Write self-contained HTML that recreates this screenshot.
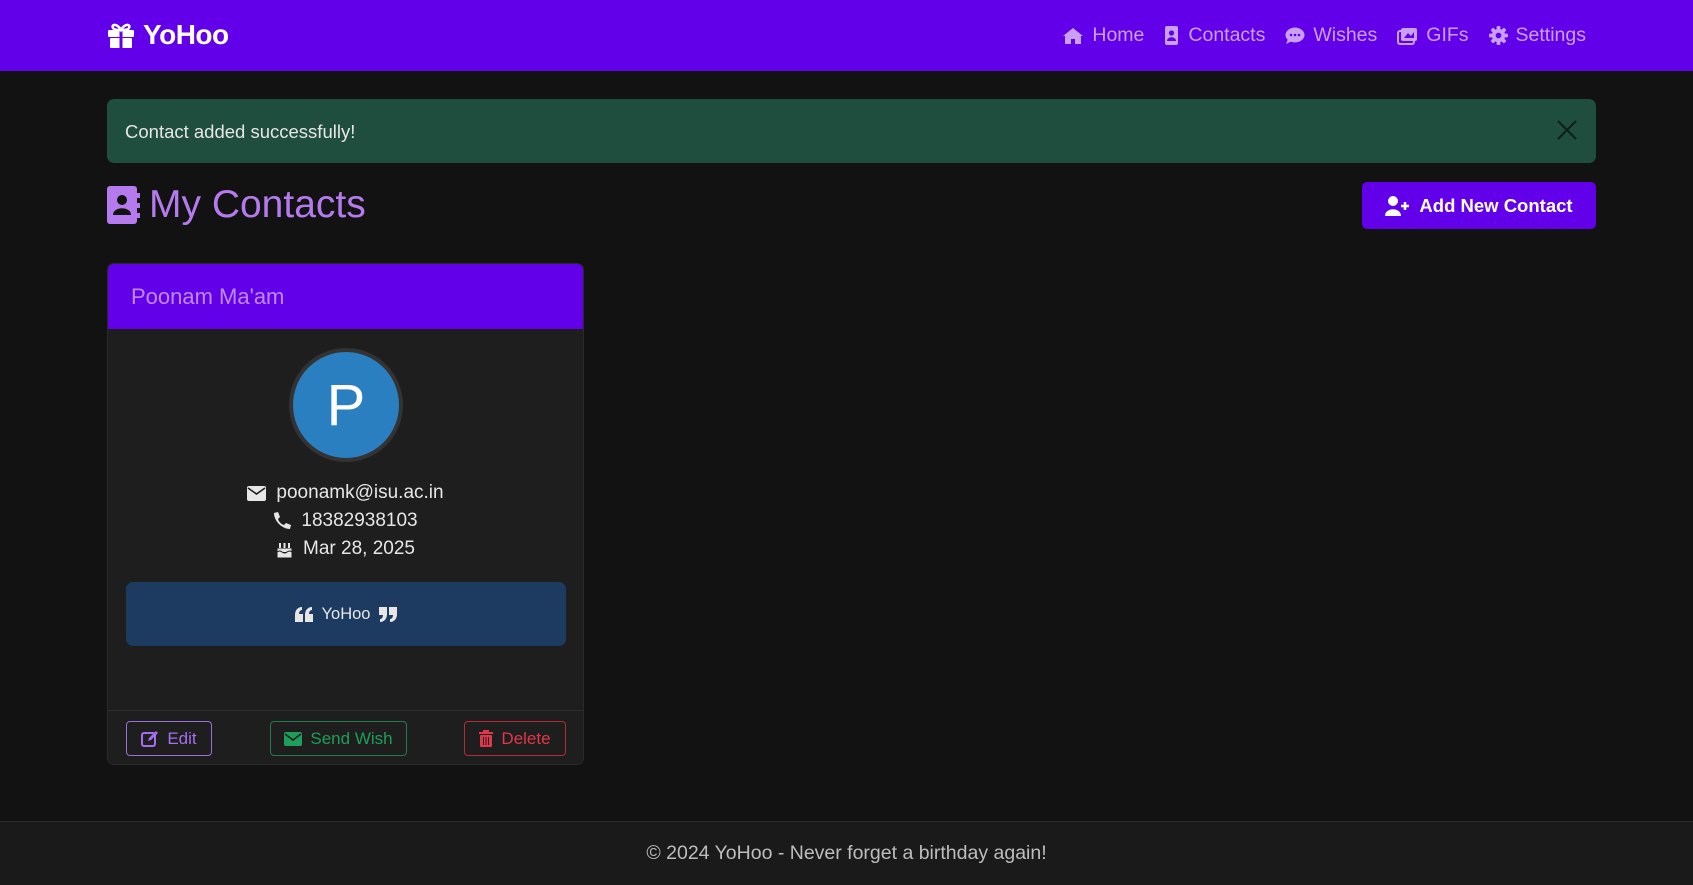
<!DOCTYPE html>
<html><head><meta charset="utf-8"><style>
*{box-sizing:border-box;margin:0;padding:0}
body{width:1693px;height:885px;background:#121212;font-family:"Liberation Sans",sans-serif;color:#e6e6e6;position:relative;overflow:hidden}
.nav{position:absolute;left:0;top:0;width:1693px;height:71px;background:#6200ea}
.brand{position:absolute;left:107px;top:19px;color:#fff;font-weight:bold;font-size:28px;display:flex;align-items:center;gap:8px;letter-spacing:-0.5px}
.links{position:absolute;right:107px;top:24px;display:flex;gap:20px;font-size:19.5px;color:#c9a0f5}
.links span{display:flex;align-items:center;gap:8px}
.alert{position:absolute;left:107px;top:99px;width:1489px;height:64px;background:#1f4d3e;border-radius:7px;font-size:18.5px;color:#e6e6e6;padding:22px 0 0 18px}
.x{position:absolute;right:18px;top:20px}
.title{position:absolute;left:107px;top:183px;display:flex;align-items:center;gap:9px;font-size:39px;color:#b57bee}
.add{position:absolute;left:1362px;top:182px;width:234px;height:47px;background:#6200ea;border-radius:5px;color:#fff;font-weight:bold;font-size:18.5px;display:flex;align-items:center;justify-content:center;gap:9px}
.card{position:absolute;left:107px;top:263px;width:477px;height:502px;background:#1e1e1e;border:1px solid #2a2a2a;border-radius:7px;overflow:hidden}
.ch{height:65px;background:#6200ea;color:#c08af5;font-size:22px;padding:20px 0 0 23px}
.av{position:absolute;left:181px;top:84px;width:114px;height:114px;border-radius:50%;background:#2a7fc0;border:4px solid #333;color:#fff;font-size:58px;display:flex;align-items:center;justify-content:center}
.info{position:absolute;left:0;width:100%;text-align:center;font-size:19px;color:#e6e6e6;display:flex;justify-content:center;align-items:center;gap:10px}
.q{position:absolute;left:18px;top:318px;width:440px;height:64px;background:#1d3a61;border-radius:7px;display:flex;align-items:center;justify-content:center;gap:9px;font-size:16.5px;color:#e6e6e6}
.cf{position:absolute;left:0;top:446px;width:100%;height:56px;border-top:1px solid #2c2c2c;background:#1e1e1e}
.b{position:absolute;top:10px;height:35px;border:1px solid;border-radius:4px;font-size:17px;display:flex;align-items:center;justify-content:center;gap:8px}
.foot{position:absolute;left:0;top:821px;width:1693px;height:64px;background:#1a1a1a;border-top:1px solid #2c2c2c;text-align:center;font-size:19.5px;color:#bdbdbd;padding-top:20px}
</style></head><body>
<div class="nav">
 <div class="brand"><svg width="28" height="26" viewBox="0 0 28 26"><rect x="1" y="8" width="26" height="7" rx="1" fill="#fff"/><rect x="3" y="16" width="22" height="10" rx="1" fill="#fff"/><rect x="12.5" y="8" width="3" height="18" fill="#6200ea"/><path d="M14 8 C10 1 4 2 6 6 C7 8 11 8 14 8 C17 8 21 8 22 6 C24 2 18 1 14 8Z" fill="none" stroke="#fff" stroke-width="2.5"/></svg>YoHoo</div>
 <div class="links">
  <span><svg width="22" height="18" viewBox="0 0 22 18"><path d="M11 1 L1 9 L3 9 L3 17 L9 17 L9 12 L13 12 L13 17 L19 17 L19 9 L21 9Z" fill="#c9a0f5"/></svg>Home</span>
  <span><svg width="16" height="19" viewBox="0 0 16 19"><rect x="1" y="0" width="13" height="19" rx="2" fill="#c9a0f5"/><circle cx="7.5" cy="7" r="2.6" fill="#6200ea"/><path d="M3 15 C3 10 12 10 12 15Z" fill="#6200ea"/></svg>Contacts</span>
  <span><svg width="20" height="18" viewBox="0 0 20 18"><ellipse cx="10" cy="8" rx="9.5" ry="7.5" fill="#c9a0f5"/><path d="M3 12 L1 17 L7 14Z" fill="#c9a0f5"/><circle cx="6" cy="8" r="1.3" fill="#6200ea"/><circle cx="10" cy="8" r="1.3" fill="#6200ea"/><circle cx="14" cy="8" r="1.3" fill="#6200ea"/></svg>Wishes</span>
  <span><svg width="21" height="18" viewBox="0 0 21 18"><rect x="4" y="1" width="16" height="13" rx="2" fill="#c9a0f5"/><rect x="1" y="4" width="16" height="13" rx="2" fill="none" stroke="#c9a0f5" stroke-width="2"/><path d="M7 11 L11 6 L14 9 L17 5 L17 11Z" fill="#6200ea"/></svg>GIFs</span>
  <span><svg width="19" height="19" viewBox="0 0 20 20"><g fill="#c9a0f5"><circle cx="10" cy="10" r="7"/><rect x="8" y="0" width="4" height="20" rx="1"/><rect x="0" y="8" width="20" height="4" rx="1"/><rect x="8" y="0" width="4" height="20" rx="1" transform="rotate(45 10 10)"/><rect x="8" y="0" width="4" height="20" rx="1" transform="rotate(-45 10 10)"/></g><circle cx="10" cy="10" r="3" fill="#6200ea"/></svg>Settings</span>
 </div>
</div>
<div class="alert">Contact added successfully!<svg class="x" width="22" height="22" viewBox="0 0 22 22"><path d="M2 2 L20 20 M20 2 L2 20" stroke="#0b1f18" stroke-width="2"/></svg></div>
<div class="title"><svg width="33" height="38" viewBox="0 0 33 38"><rect x="0" y="0" width="30" height="38" rx="3" fill="#b57bee"/><rect x="29" y="7" width="4" height="5" fill="#b57bee"/><rect x="29" y="17" width="4" height="5" fill="#b57bee"/><rect x="29" y="27" width="4" height="5" fill="#b57bee"/><circle cx="15" cy="14" r="5" fill="#121212"/><path d="M6 29 C6 20 24 20 24 29Z" fill="#121212"/></svg>My Contacts</div>
<div class="add"><svg width="25" height="20" viewBox="0 0 25 20"><circle cx="8" cy="5" r="5" fill="#fff"/><path d="M0 20 C0 11 16 11 16 20Z" fill="#fff"/><path d="M20 6 V14 M16 10 H24" stroke="#fff" stroke-width="2.5"/></svg>Add New Contact</div>
<div class="card">
 <div class="ch">Poonam Ma'am</div>
 <div class="av">P</div>
 <div class="info" style="top:218px"><svg width="19" height="15" viewBox="0 0 19 15"><rect x="0" y="0" width="19" height="15" rx="2" fill="#e6e6e6"/><path d="M1 2 L9.5 8 L18 2" stroke="#1e1e1e" stroke-width="1.6" fill="none"/></svg>poonamk@isu.ac.in</div>
 <div class="info" style="top:246px"><svg width="18" height="18" viewBox="0 0 18 18"><path d="M17 1 L13 0 L11 5 L13 7 C12 10 10 12 7 13 L5 11 L0 13 L1 17 C9 17 17 9 17 1Z" fill="#e6e6e6" transform="translate(18 0) scale(-1 1)"/></svg>18382938103</div>
 <div class="info" style="top:274px"><svg width="17" height="18" viewBox="0 0 17 18"><path d="M1 18 V8 H16 V18Z M1 12 Q4 10 6 12 Q9 14 11 12 Q14 10 16 12" fill="#e6e6e6" stroke="#1e1e1e" stroke-width="1"/><rect x="3" y="3" width="2" height="5" fill="#e6e6e6"/><rect x="7.5" y="3" width="2" height="5" fill="#e6e6e6"/><rect x="12" y="3" width="2" height="5" fill="#e6e6e6"/></svg>Mar 28, 2025</div>
 <div class="q"><svg width="18" height="15" viewBox="0 0 18 15"><path d="M0 15 V8 C0 3 3 0 7 0 V3 C5 3 4 5 4 7 H8 V15Z M10 15 V8 C10 3 13 0 17 0 V3 C15 3 14 5 14 7 H18 V15Z" fill="#e6e6e6"/></svg>YoHoo<svg width="18" height="15" viewBox="0 0 18 15"><path d="M0 15 V8 C0 3 3 0 7 0 V3 C5 3 4 5 4 7 H8 V15Z M10 15 V8 C10 3 13 0 17 0 V3 C15 3 14 5 14 7 H18 V15Z" fill="#e6e6e6" transform="rotate(180 9 7.5)"/></svg></div>
 <div class="cf">
  <div class="b" style="left:18px;width:86px;border-color:#9b6fd8;color:#a56ef0"><svg width="18" height="17" viewBox="0 0 18 17"><rect x="1" y="3" width="13" height="13" rx="2" fill="none" stroke="#a56ef0" stroke-width="2"/><path d="M7 11 L8 8 L15 1 L17 3 L10 10Z" fill="#a56ef0"/></svg>Edit</div>
  <div class="b" style="left:162px;width:137px;border-color:#1f7a4c;color:#1e9e5a"><svg width="18" height="14" viewBox="0 0 18 14"><rect width="18" height="14" rx="2" fill="#1e9e5a"/><path d="M1 2 L9 8 L17 2" stroke="#1e1e1e" stroke-width="1.5" fill="none"/></svg>Send Wish</div>
  <div class="b" style="left:356px;width:102px;border-color:#b62a36;color:#e0374a"><svg width="14" height="17" viewBox="0 0 14 17"><rect x="0" y="2" width="14" height="2" fill="#e0374a"/><rect x="4" y="0" width="6" height="2" fill="#e0374a"/><rect x="1" y="5" width="12" height="12" rx="1" fill="#e0374a"/><path d="M4.5 7 V15 M7 7 V15 M9.5 7 V15" stroke="#1e1e1e" stroke-width="1"/></svg>Delete</div>
 </div>
</div>
<div class="foot">© 2024 YoHoo - Never forget a birthday again!</div>
</body></html>
